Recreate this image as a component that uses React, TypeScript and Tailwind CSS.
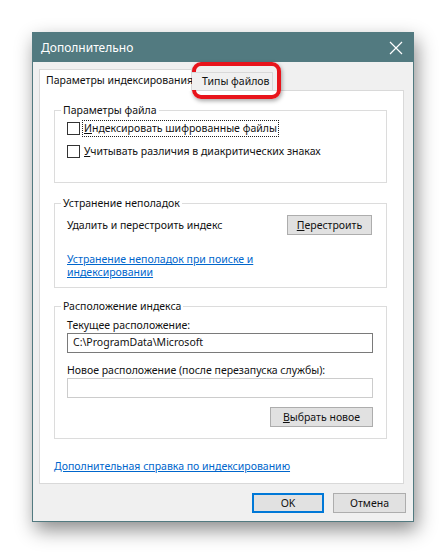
import React from 'react'

function Check({ children, focused }: { children: React.ReactNode; focused?: boolean }) {
  return (
    <label className="flex h-[17px] items-center">
      <span className="h-[13px] w-[13px] shrink-0 border border-[#333333] bg-white" />
      <span className={`ml-[3px] px-[1px] leading-[15px] ${focused ? 'outline outline-1 outline-dotted outline-[#222]' : ''}`}>
        {children}
      </span>
    </label>
  )
}

function WinButton({ children, width, primary }: { children: React.ReactNode; width: string; primary?: boolean }) {
  return (
    <button
      className={`h-[20px] ${width} bg-[#e1e1e1] text-[#111] leading-none ${
        primary ? 'border-2 border-[#0078d7]' : 'border border-[#adadad]'
      }`}
    >
      {children}
    </button>
  )
}

export default function App() {
  return (
    <div
      className="min-h-[555px] bg-white pl-[32px] pt-[32px] text-[10.5px] text-[#111]"
      style={{ fontFamily: '"Noto Sans", "Open Sans", sans-serif' }}
    >
      <div className="relative flex h-[490px] w-[382px] flex-col border border-[#527a80] bg-[#f0f0f0] shadow-[3px_8px_18px_rgba(0,0,0,0.45)]">
        {/* title bar */}
        <div className="flex h-[29px] shrink-0 items-center justify-between bg-[#527a80] pl-[8px] pr-[10px] text-white">
          <span className="text-[12px]">Дополнительно</span>
          <svg width="14" height="14" viewBox="0 0 14 14" className="mt-[1px]">
            <path d="M1 1 L13 13 M13 1 L1 13" stroke="white" strokeWidth="1.2" />
          </svg>
        </div>

        <div className="flex flex-1 flex-col pl-[6px] pt-[7px]">
          {/* tabs */}
          <div className="relative z-10 flex h-[21px] whitespace-nowrap">
            <div className="flex h-[22px] w-[153px] shrink-0 items-start border border-b-0 border-[#d9d9d9] bg-white pl-[6px] pt-[3px]">
              Параметры индексирования
            </div>
            <div className="mt-[3px] flex h-[18px] w-[81px] shrink-0 items-start border border-b-0 border-l-0 border-[#d9d9d9] bg-[#f0f0f0] pl-[10px] pt-[1px]">
              Типы файлов
            </div>
          </div>

          {/* panel */}
          <div className="flex h-[394px] w-[365px] flex-col border border-[#d9d9d9] bg-white pl-[14px]">
            <fieldset className="mt-[11px] h-[81px] w-[333px] border border-[#dcdcdc]">
              <legend className="ml-[6px] px-[2px] leading-[16px]">Параметры файла</legend>
              <div className="mt-[2px] flex flex-col gap-[6px] pl-[12px]">
                <Check focused>
                  <u>И</u>ндексировать шифрованные файлы
                </Check>
                <Check>
                  <u>У</u>читывать различия в диакритических знаках
                </Check>
              </div>
            </fieldset>

            <fieldset className="mt-[12px] h-[93px] w-[333px] border border-[#dcdcdc]">
              <legend className="ml-[6px] px-[2px] leading-[16px]">Устранение неполадок</legend>
              <div className="flex flex-col pl-[12px] pr-[14px]">
                <div className="mt-[4px] flex h-[20px] items-center justify-between">
                  <span className="mt-[1px]">Удалить и перестроить индекс</span>
                  <WinButton width="w-[85px]">
                    <u>П</u>ерестроить
                  </WinButton>
                </div>
                <a className="mt-[18px] w-[192px] leading-[13px] text-[#0066cc] underline">
                  Устранение неполадок при поиске и индексировании
                </a>
              </div>
            </fieldset>

            <fieldset className="mt-[10px] h-[141px] w-[333px] border border-[#dcdcdc]">
              <legend className="ml-[6px] px-[2px] leading-[16px]">Расположение индекса</legend>
              <div className="flex flex-col pl-[12px] pr-[13px]">
                <span className="mt-[5px] leading-[13px]">Текущее расположение:</span>
                <div className="mt-[1px] flex h-[20px] items-center border border-[#7a7a7a] bg-white pl-[5px]">
                  C:\ProgramData\Microsoft
                </div>
                <span className="mt-[11px] leading-[13px]">Новое расположение (после перезапуска службы):</span>
                <div className="mt-[1px] h-[20px] border border-[#cccccc] bg-white" />
                <div className="mt-[9px] flex justify-end">
                  <WinButton width="w-[103px]">
                    <u>В</u>ыбрать новое
                  </WinButton>
                </div>
              </div>
            </fieldset>

            <a className="mt-[20px] leading-[14px] text-[#0066cc] underline">
              Дополнительная справка по индексированию
            </a>
          </div>

          {/* bottom buttons */}
          <div className="mt-[9px] flex justify-end gap-[9px] pr-[7px]">
            <WinButton width="w-[72px]" primary>
              OK
            </WinButton>
            <WinButton width="w-[73px]">Отмена</WinButton>
          </div>
        </div>

        {/* red highlight around the second tab */}
        <div className="pointer-events-none absolute left-[159px] top-[29px] h-[37px] w-[89px] rounded-[9px] border-[4px] border-[#e8141b] shadow-[1px_2px_4px_rgba(0,0,0,0.35)]" />
      </div>
    </div>
  )
}
